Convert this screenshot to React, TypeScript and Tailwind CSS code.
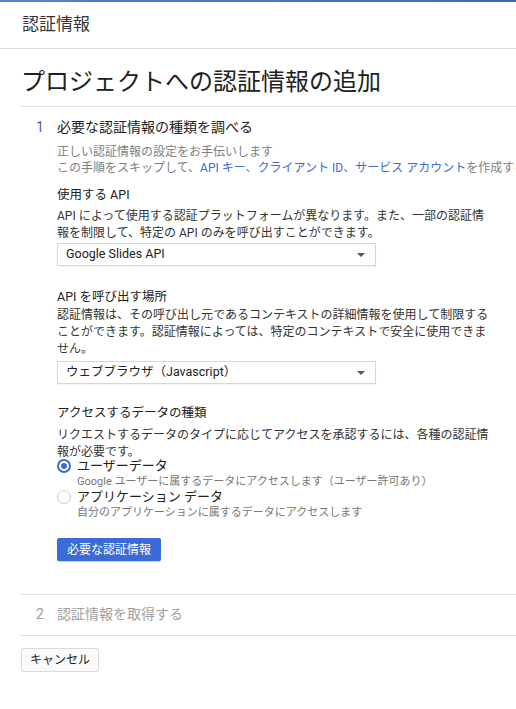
import { useState } from "react";

const font = "font-['Roboto','Noto_Sans_CJK_JP',sans-serif]";

function SelectBox({ value }: { value: string }) {
  return (
    <div className="flex h-[23px] w-[319px] items-center justify-between border border-[#d6d6d6] bg-white pl-[8px] pr-[10px] text-[12.5px] text-[#222] shadow-[0_1px_1px_rgba(0,0,0,0.05)]">
      <span>{value}</span>
      <span className="h-0 w-0 border-x-[4px] border-t-[4px] border-x-transparent border-t-[#555]" />
    </div>
  );
}

function Radio({ checked }: { checked: boolean }) {
  return checked ? (
    <span className="flex h-[14px] w-[14px] shrink-0 items-center justify-center rounded-full border-2 border-[#3b6bd6]">
      <span className="h-[6px] w-[6px] rounded-full bg-[#3b6bd6]" />
    </span>
  ) : (
    <span className="h-[14px] w-[14px] shrink-0 rounded-full border border-[#cfcfcf] bg-white" />
  );
}

export default function App() {
  const [dataType, setDataType] = useState("user");

  return (
    <div className={`min-h-[709px] w-[516px] overflow-hidden bg-white ${font}`}>
      <div className="h-[2px] bg-gradient-to-r from-[#5a7fd0] to-[#3f66c2]" />
      <div className="flex h-[47px] items-center border-b border-[#dcdcdc] pl-[22px] text-[17px] text-[#333]">
        認証情報
      </div>

      <div className="ml-[21px]">
        <h1 className="border-b border-[#dcdcdc] pb-[9px] pt-[18px] text-[24px] font-normal leading-[30px] text-[#212121]">
          プロジェクトへの認証情報の追加
        </h1>

        {/* step 1 */}
        <div className="border-b border-[#dcdcdc] pb-[33px]">
          <div className="flex pt-[10px] text-[14px] leading-[20px]">
            <span className="w-[36px] pl-[15px] text-[#4a5ea8]">1</span>
            <span className="text-[#212121]">必要な認証情報の種類を調べる</span>
          </div>

          <div className="pl-[36px]">
            <div className="mt-[7px] text-[12px] leading-[16px] text-[#808080]">
              <p>正しい認証情報の設定をお手伝いします</p>
              <p className="whitespace-nowrap">
                この手順をスキップして、
                <span className="text-[#3b6bd6]">API キー</span>、
                <span className="text-[#3b6bd6]">クライアント ID</span>、
                <span className="text-[#3b6bd6]">サービス アカウント</span>
                を作成することもできます
              </p>
            </div>

            <p className="mt-[9px] text-[12.5px] leading-[20px] text-[#212121]">使用する API</p>
            <p className="mt-[3px] w-[438px] text-[12px] leading-[17px] text-[#333]">
              API によって使用する認証プラットフォームが異なります。また、一部の認証情報を制限して、特定の API のみを呼び出すことができます。
            </p>
            <div className="mt-[1px]">
              <SelectBox value="Google Slides API" />
            </div>

            <p className="mt-[21px] text-[12.5px] leading-[20px] text-[#212121]">API を呼び出す場所</p>
            <p className="w-[438px] text-[12px] leading-[17px] text-[#333]">
              認証情報は、その呼び出し元であるコンテキストの詳細情報を使用して制限することができます。認証情報によっては、特定のコンテキストで安全に使用できません。
            </p>
            <div className="mt-[3px]">
              <SelectBox value="ウェブブラウザ（Javascript）" />
            </div>

            <p className="mt-[19px] text-[12.5px] leading-[20px] text-[#212121]">アクセスするデータの種類</p>
            <p className="mt-[4px] w-[438px] text-[12px] leading-[17px] text-[#333]">
              リクエストするデータのタイプに応じてアクセスを承認するには、各種の認証情報が必要です。
            </p>

            <div className="-mt-[3px]">
              <button
                onClick={() => setDataType("user")}
                className="flex h-[16px] items-center gap-[6px] text-[13px] leading-[16px] text-[#212121]"
              >
                <Radio checked={dataType === "user"} />
                <span>ユーザーデータ</span>
              </button>
              <p className="pl-[20px] text-[11px] leading-[15px] text-[#777]">
                Google ユーザーに属するデータにアクセスします（ユーザー許可あり）
              </p>
              <button
                onClick={() => setDataType("app")}
                className="flex h-[16px] items-center gap-[6px] text-[13px] leading-[16px] text-[#212121]"
              >
                <Radio checked={dataType === "app"} />
                <span>アプリケーション データ</span>
              </button>
              <p className="pl-[20px] text-[11px] leading-[15px] text-[#777]">
                自分のアプリケーションに属するデータにアクセスします
              </p>
            </div>

            <button className="mt-[18px] flex h-[23px] items-center rounded-[2px] bg-[#3b6bd6] px-[10px] text-[12px] text-white shadow-[0_1px_1px_rgba(0,0,0,0.2)]">
              必要な認証情報
            </button>
          </div>
        </div>

        {/* step 2 */}
        <div className="flex border-b border-[#dcdcdc] pb-[11px] pt-[9px] text-[14px] leading-[20px] text-[#a0a0a0]">
          <span className="w-[36px] pl-[15px]">2</span>
          <span>認証情報を取得する</span>
        </div>

        <button className="mt-[12px] flex h-[24px] items-center rounded-[2px] border border-[#d9d9d9] bg-[#fafafa] px-[8px] text-[12px] text-[#222]">
          キャンセル
        </button>
      </div>
    </div>
  );
}
